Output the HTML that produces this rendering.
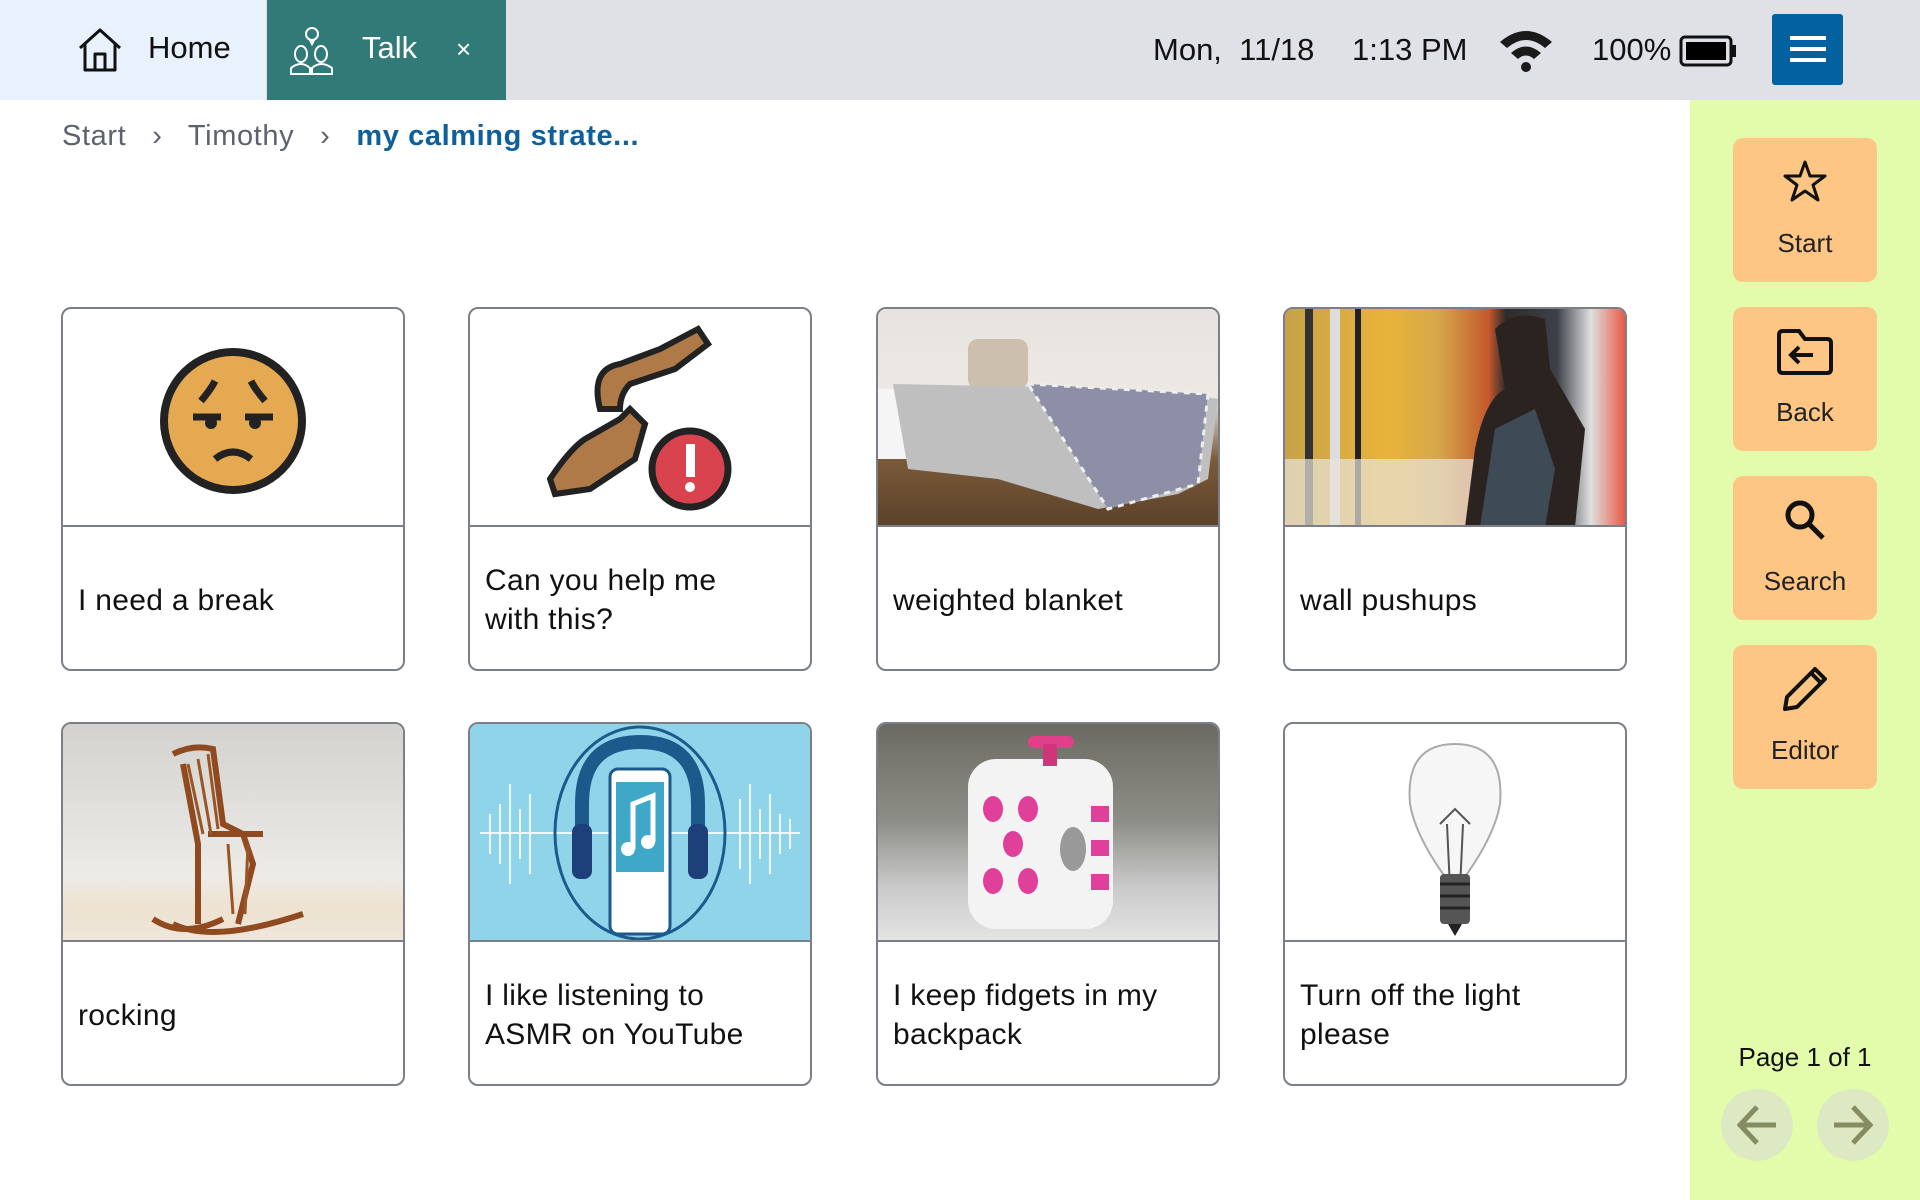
<!DOCTYPE html>
<html><head><meta charset="utf-8"><style>
*{margin:0;padding:0;box-sizing:border-box}
body{width:1920px;height:1200px;overflow:hidden;background:#fff;font-family:"Liberation Sans",sans-serif;position:relative;color:#1c1c1c}
.abs{position:absolute}
.top{left:0;top:0;width:1920px;height:100px;background:#e0e1e6}
.home{left:0;top:0;width:266px;height:100px;background:#e8f1fc}
.talk{left:267px;top:0;width:239px;height:100px;background:#317a77}
.tt{font-size:31px;top:30px}
.side{left:1690px;top:100px;width:230px;height:1100px;background:#e3fcab}
.btn{left:1733px;width:144px;height:144px;background:#fdc684;border-radius:10px}
.btn span{position:absolute;left:0;right:0;top:90px;text-align:center;font-size:26px;color:#222}
.btn svg{position:absolute;left:50%;transform:translateX(-50%);top:20px}
.card{width:344px;height:364px;border:2px solid #7a7f88;border-radius:10px;overflow:hidden;background:#fff}
.card .img{position:absolute;left:0;top:0;width:340px;height:218px;border-bottom:2px solid #7a7f88;overflow:hidden}
.card .lab{position:absolute;left:15px;width:275px;top:220px;height:142px;display:flex;align-items:center;font-size:30px;line-height:39px;color:#111;letter-spacing:0.3px}
</style></head><body>
<div class="abs top"></div>
<div class="abs home"></div>
<svg class="abs" style="left:76px;top:26px" width="48" height="48" viewBox="0 0 48 48"><path d="M4 22 L24 4 L44 22 M9 18 V44 H39 V18 M19 44 V28 H29 V44" fill="none" stroke="#111" stroke-width="3" stroke-linejoin="round"/></svg>
<div class="abs tt" style="left:148px;color:#111">Home</div>
<div class="abs talk"></div>
<svg class="abs" style="left:288px;top:26px" width="50" height="50" viewBox="0 0 50 50" fill="none" stroke="#fff" stroke-width="2"><circle cx="24" cy="8" r="6"/><path d="M22 14 L24 18 L26 14"/><ellipse cx="13" cy="28" rx="6" ry="8"/><ellipse cx="33" cy="28" rx="6" ry="8"/><path d="M3 48 V42 Q13 34 22 42 V48 Z M24 48 V42 Q33 34 44 42 V48 Z"/></svg>
<div class="abs tt" style="left:362px;color:#fff">Talk</div>
<div class="abs" style="left:456px;top:34px;font-size:26px;color:#fff">×</div>
<div class="abs tt" style="left:1153px;top:32px;color:#111">Mon,&nbsp; 11/18</div>
<div class="abs tt" style="left:1352px;top:32px;color:#111">1:13 PM</div>
<svg class="abs" style="left:1496px;top:26px" width="60" height="48" viewBox="0 0 60 48"><path d="M4 16 Q30 -6 56 16 L49 22 Q30 6 11 22 Z M15 27 Q30 14 45 27 L38 33 Q30 26 22 33 Z" fill="#1a1a1a"/><circle cx="30" cy="41" r="5" fill="#1a1a1a"/></svg>
<div class="abs tt" style="left:1592px;top:32px;color:#111">100%</div>
<svg class="abs" style="left:1679px;top:35px" width="60" height="32" viewBox="0 0 60 32"><rect x="2" y="2" width="50" height="28" rx="4" fill="none" stroke="#111" stroke-width="3"/><rect x="7" y="7" width="40" height="18" fill="#000"/><rect x="53" y="10" width="4" height="12" fill="#111"/></svg>
<div class="abs" style="left:1772px;top:14px;width:71px;height:71px;background:#02619e;border-radius:3px"></div>
<div class="abs" style="left:1790px;top:36px;width:36px;height:4px;background:#fff"></div>
<div class="abs" style="left:1790px;top:47px;width:36px;height:4px;background:#fff"></div>
<div class="abs" style="left:1790px;top:58px;width:36px;height:4px;background:#fff"></div>

<div class="abs" style="left:62px;top:120px;font-size:29px;letter-spacing:0.6px;color:#5d636d">Start &nbsp;&nbsp;›&nbsp;&nbsp; Timothy &nbsp;&nbsp;›&nbsp;&nbsp; <span style="color:#0e5f9a;font-weight:bold">my calming strate...</span></div>

<div class="abs side"></div>
<div class="abs btn" style="top:138px"><svg width="48" height="48" viewBox="0 0 48 48"><path d="M24 4 L29 18 L44 18 L32 27 L37 42 L24 33 L11 42 L16 27 L4 18 L19 18 Z" fill="none" stroke="#111" stroke-width="3" stroke-linejoin="round"/></svg><span>Start</span></div>
<div class="abs btn" style="top:307px"><svg width="60" height="50" viewBox="0 0 60 50"><path d="M4 8 Q4 4 8 4 H24 L30 12 H52 Q56 12 56 16 V42 Q56 46 52 46 H8 Q4 46 4 42 Z" fill="none" stroke="#111" stroke-width="4"/><path d="M38 28 H16 M24 20 L16 28 L24 36" fill="none" stroke="#111" stroke-width="4"/></svg><span>Back</span></div>
<div class="abs btn" style="top:476px"><svg width="48" height="48" viewBox="0 0 48 48"><circle cx="19" cy="19" r="12" fill="none" stroke="#111" stroke-width="5"/><path d="M28 28 L42 42" stroke="#111" stroke-width="5"/></svg><span>Search</span></div>
<div class="abs btn" style="top:645px"><svg width="48" height="48" viewBox="0 0 48 48"><path d="M34 4 L44 14 L16 42 L4 44 L6 32 Z" fill="none" stroke="#111" stroke-width="4" stroke-linejoin="round"/><path d="M30 8 L40 18" stroke="#111" stroke-width="4"/></svg><span>Editor</span></div>
<div class="abs" style="left:1690px;top:1042px;width:230px;text-align:center;font-size:26px;color:#111">Page 1 of 1</div>
<svg class="abs" style="left:1720px;top:1088px" width="180" height="76" viewBox="0 0 180 76"><circle cx="37" cy="37" r="36" fill="#dde9c2"/><circle cx="133" cy="37" r="36" fill="#dde9c2"/><path d="M56 37 H20 M37 19 L20 37 L37 55" fill="none" stroke="#858c62" stroke-width="5"/><path d="M114 37 H150 M133 19 L150 37 L133 55" fill="none" stroke="#858c62" stroke-width="5"/></svg>

<!-- row 1 -->
<div class="abs card" style="left:61px;top:307px"><div class="img"><svg width="340" height="218"><circle cx="170" cy="112" r="69" fill="#e4a951" stroke="#222" stroke-width="8"/><path d="M138 92 Q148 80 152 72 M202 92 Q192 80 188 72 M130 108 H158 M182 108 H210 M152 150 Q170 136 188 150" fill="none" stroke="#222" stroke-width="7"/><circle cx="148" cy="114" r="6" fill="#222"/><circle cx="192" cy="114" r="6" fill="#222"/></svg></div><div class="lab">I need a break</div></div>
<div class="abs card" style="left:468px;top:307px"><div class="img"><svg width="340" height="218"><path d="M130 100 Q120 60 150 55 L190 40 L228 20 L238 35 L205 60 L160 75 Q150 85 150 100 Z" fill="#b07a48" stroke="#222" stroke-width="6"/><path d="M85 185 L80 170 Q100 140 115 130 L150 110 L160 100 L175 115 L165 150 L120 180 Z" fill="#b07a48" stroke="#222" stroke-width="6"/><circle cx="220" cy="160" r="38" fill="#d8434e" stroke="#222" stroke-width="7"/><rect x="216" y="135" width="9" height="33" fill="#fff"/><circle cx="220" cy="178" r="5" fill="#fff"/></svg></div><div class="lab">Can you help me with this?</div></div>
<div class="abs card" style="left:876px;top:307px"><div class="img" style="background:linear-gradient(#e7e3df 0%,#ece8e3 40%,#7a5a3a 70%,#5c422a 100%)"><svg width="340" height="218"><rect x="0" y="80" width="60" height="70" fill="#f5f5f5"/><rect x="90" y="30" width="60" height="50" rx="10" fill="#cdbfae"/><path d="M15 75 L260 80 L340 90 L330 170 L300 185 L220 200 L120 170 L30 160 Z" fill="#c0bfbf"/><path d="M150 75 L330 85 L320 175 L230 200 Z" fill="#8d8fa6"/><path d="M150 75 L330 85 L320 175 L230 200 Z" fill="none" stroke="#eee" stroke-width="3" stroke-dasharray="6 6"/></svg></div><div class="lab">weighted blanket</div></div>
<div class="abs card" style="left:1283px;top:307px"><div class="img" style="background:linear-gradient(90deg,#c7a24a 0%,#e8b33a 30%,#d6a84a 45%,#c4582d 60%,#2d2a2a 65%,#3d4148 80%,#e0e0e0 90%,#e85a44 100%)"><svg width="340" height="218"><rect x="20" y="0" width="8" height="218" fill="#333"/><rect x="45" y="0" width="10" height="218" fill="#ddd"/><rect x="70" y="0" width="6" height="218" fill="#222"/><rect x="0" y="150" width="200" height="68" fill="#e8e4dc" opacity=".7"/><path d="M210 20 Q230 0 260 10 L265 60 L300 120 L290 218 L180 218 L190 140 Q200 90 220 80 Z" fill="#2b2320"/><path d="M195 218 L210 120 L250 100 L270 160 L260 218 Z" fill="#3e4a55"/></svg></div><div class="lab">wall pushups</div></div>

<!-- row 2 -->
<div class="abs card" style="left:61px;top:722px"><div class="img" style="background:linear-gradient(180deg,#d4d2ce 0%,#ecebe7 70%,#eee2d0 85%,#efe6da 100%)"><svg width="340" height="218"><path d="M110 30 Q130 20 150 25 L160 100 L180 110 L190 140 L175 200 M120 40 L135 120 L135 200 M145 110 L200 110 M110 200 Q150 220 240 190 M90 195 Q120 215 160 195" fill="none" stroke="#8f4a1f" stroke-width="6"/><path d="M125 40 L140 110 M135 35 L148 110 M145 30 L155 105 M165 120 L170 190 M185 120 L182 190" stroke="#9a5526" stroke-width="3"/></svg></div><div class="lab">rocking</div></div>
<div class="abs card" style="left:468px;top:722px"><div class="img" style="background:#8fd4e8"><svg width="340" height="218"><g stroke="#fff" stroke-width="2" opacity=".85"><path d="M10 109 H330"/><path d="M20 90 V130 M30 80 V140 M40 60 V160 M50 85 V135 M60 70 V150 M270 75 V145 M280 60 V160 M290 85 V135 M300 70 V150 M310 90 V130 M320 95 V125"/></g><ellipse cx="170" cy="109" rx="85" ry="106" fill="none" stroke="#1d5a8c" stroke-width="3"/><path d="M112 130 V80 Q112 18 170 18 Q228 18 228 80 V130" fill="none" stroke="#1d5a8c" stroke-width="14"/><rect x="140" y="45" width="60" height="165" rx="8" fill="#fff" stroke="#1d5a8c" stroke-width="3"/><rect x="146" y="58" width="48" height="90" fill="#3fa8c8"/><rect x="102" y="100" width="20" height="55" rx="8" fill="#1d3f7a"/><rect x="218" y="100" width="20" height="55" rx="8" fill="#1d3f7a"/><path d="M163 125 V80 L183 72 V118" fill="none" stroke="#fff" stroke-width="5"/><circle cx="158" cy="125" r="7" fill="#fff"/><circle cx="178" cy="118" r="7" fill="#fff"/></svg></div><div class="lab">I like listening to ASMR on YouTube</div></div>
<div class="abs card" style="left:876px;top:722px"><div class="img" style="background:linear-gradient(180deg,#6b6a62 0%,#8e8e88 45%,#c9c9c9 75%,#e4e4e4 100%)"><svg width="340" height="218"><rect x="90" y="35" width="145" height="170" rx="28" fill="#f3f3f3"/><rect x="150" y="12" width="46" height="12" rx="6" fill="#e0408a"/><rect x="165" y="20" width="14" height="22" fill="#d0357a"/><g fill="#e0409a"><ellipse cx="115" cy="85" rx="10" ry="13"/><ellipse cx="150" cy="85" rx="10" ry="13"/><ellipse cx="135" cy="120" rx="10" ry="13"/><ellipse cx="115" cy="157" rx="10" ry="13"/><ellipse cx="150" cy="157" rx="10" ry="13"/><rect x="213" y="82" width="18" height="16"/><rect x="213" y="116" width="18" height="16"/><rect x="213" y="150" width="18" height="16"/></g><ellipse cx="195" cy="125" rx="13" ry="22" fill="#999"/></svg></div><div class="lab">I keep fidgets in my backpack</div></div>
<div class="abs card" style="left:1283px;top:722px"><div class="img"><svg width="340" height="218"><path d="M170 20 Q120 20 125 80 Q130 110 158 150 L158 185 L182 185 L182 150 Q210 110 215 80 Q220 20 170 20 Z" fill="#f6f6f6" stroke="#aaa" stroke-width="2"/><path d="M155 100 L170 85 L185 100 M162 100 L165 165 M178 100 L175 165" fill="none" stroke="#555" stroke-width="2"/><rect x="155" y="150" width="30" height="50" rx="4" fill="#555"/><path d="M155 160 H185 M155 172 H185 M155 184 H185" stroke="#222" stroke-width="3"/><path d="M163 200 L170 212 L177 200 Z" fill="#222"/></svg></div><div class="lab">Turn off the light please</div></div>
</body></html>
